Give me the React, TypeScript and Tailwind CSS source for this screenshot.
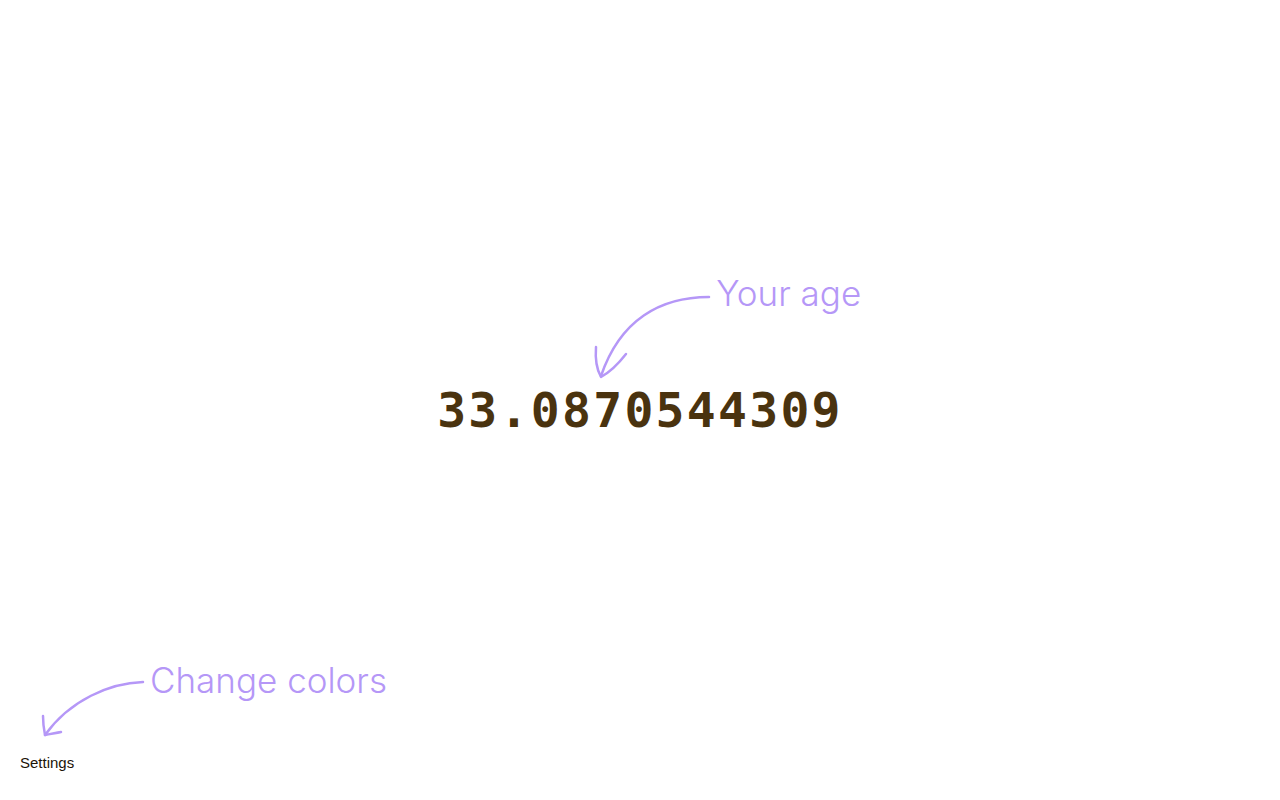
function Arrows() {
  return (
    <svg
      className="pointer-events-none absolute inset-0"
      width="1280"
      height="800"
      fill="none"
      stroke="#b597f7"
      strokeWidth="2.5"
      strokeLinecap="round"
      strokeLinejoin="round"
    >
      <path d="M709 297 C 660 297, 620 320, 601 376" />
      <path d="M596 347 C 595 360, 597 370, 601 377 C 610 372, 619 363, 626 354" />
      <path d="M143 682 C 110 683, 70 700, 45 735" />
      <path d="M43 716 C 43 724, 44 730, 45 735 C 50 734, 56 733, 61 732" />
    </svg>
  )
}

export default function App() {
  return (
    <div className="relative flex h-screen w-full flex-col overflow-hidden bg-white">
      <Arrows />
      <main className="flex flex-1 items-center justify-center pt-[156px]">
        <div className="relative">
          <div className="font-['DejaVu_Sans_Mono',monospace] text-[48px] font-bold tracking-[0.048em] text-[#4a330f]">
            33.0870544309
          </div>
          <span className="absolute left-[279px] top-[-98px] whitespace-nowrap font-['Inter',sans-serif] text-[35px] font-light leading-none text-[#b597f7]">
            Your age
          </span>
        </div>
      </main>
      <footer className="flex flex-col items-start gap-[57px] px-[20px] pb-[30px]">
        <span className="ml-[130px] whitespace-nowrap font-['Inter',sans-serif] text-[35px] font-light leading-none text-[#b597f7]">
          Change colors
        </span>
        <button className="font-['Liberation_Sans',Arial,sans-serif] text-[15px] leading-none text-[#1c1408]">
          Settings
        </button>
      </footer>
    </div>
  )
}
